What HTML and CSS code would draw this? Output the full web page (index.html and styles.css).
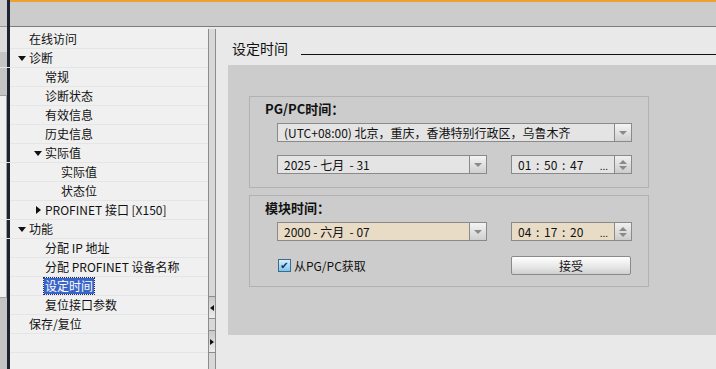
FILE: index.html
```html
<!DOCTYPE html>
<html lang="zh-CN">
<head>
    <meta charset="UTF-8">
    <title>设定时间</title>
    <link rel="stylesheet" href="styles.css">
</head>
<body>
<div class="app">
    <div class="side_strip">
        <div class="strip_top"></div>
        <div class="strip_band"></div>
        <div class="strip_box"></div>
    </div>
    <div class="divider"></div>
    <div class="main">
        <div class="orange"></div>
        <div class="toolbar"></div>
        <div class="body">
            <ul class="tree">
                <li class="row lv0">在线访问</li>
                <li class="row lv0 open"><span class="tw down"></span>诊断</li>
                <li class="row lv1">常规</li>
                <li class="row lv1">诊断状态</li>
                <li class="row lv1">有效信息</li>
                <li class="row lv1">历史信息</li>
                <li class="row lv1 open"><span class="tw down"></span>实际值</li>
                <li class="row lv2">实际值</li>
                <li class="row lv2">状态位</li>
                <li class="row lv1 open"><span class="tw right"></span>PROFINET 接口 [X150]</li>
                <li class="row lv0 open"><span class="tw down"></span>功能</li>
                <li class="row lv1">分配 IP 地址</li>
                <li class="row lv1">分配 PROFINET 设备名称</li>
                <li class="row lv1"><span class="selected">设定时间</span></li>
                <li class="row lv1">复位接口参数</li>
                <li class="row lv0">保存/复位</li>
                <li class="row lv0"></li>
            </ul>
            <div class="splitter">
                <div class="split_btn"><span class="tri_left"></span></div>
                <div class="split_btn"><span class="tri_right"></span></div>
            </div>
            <div class="content">
                <div class="page_title"><span>设定时间</span><div class="title_line"></div></div>
                <div class="panel">
                    <div class="group">
                        <div class="legend">PG/PC时间：</div>
                        <div class="field zone">
                            <span class="val">(UTC+08:00) 北京，重庆，香港特别行政区，乌鲁木齐</span>
                            <span class="drop"></span>
                        </div>
                        <div class="field_row">
                            <div class="field date">
                                <span class="val">2025 - 七月&nbsp; - 31</span>
                                <span class="drop"></span>
                            </div>
                            <div class="field time">
                                <span class="val clock">01 : 50 : 47</span>
                                <span class="dots">...</span>
                                <span class="spin"><i class="up"></i><i class="dn"></i></span>
                            </div>
                        </div>
                    </div>
                    <div class="group">
                        <div class="legend">模块时间：</div>
                        <div class="field_row first">
                            <div class="field date beige">
                                <span class="val">2000 - 六月&nbsp; - 07</span>
                                <span class="drop"></span>
                            </div>
                            <div class="field time beige">
                                <span class="val clock">04 : 17 : 20</span>
                                <span class="dots">...</span>
                                <span class="spin"><i class="up"></i><i class="dn"></i></span>
                            </div>
                        </div>
                        <div class="field_row check_row">
                            <label class="check"><span class="box">✔</span>从PG/PC获取</label>
                            <button class="accept">接受</button>
                        </div>
                    </div>
                </div>
            </div>
        </div>
    </div>
</div>
</body>
</html>
```

FILE: styles.css
```css
* {
    box-sizing: border-box;
}
body {
    margin: 0;
    padding: 0;
    font-family: "Noto Sans CJK SC", "Noto Sans", sans-serif;
    font-size: 12px;
    color: #111;
    background-color: #e9e9e9;
    width: 716px;
    height: 369px;
    overflow: hidden;
}
.app {
    display: flex;
    height: 369px;
}

/* far left strip */
.side_strip {
    width: 7px;
    display: flex;
    flex-direction: column;
    background-color: #c4c4c4;
}
.strip_top {
    height: 27px;
    background-color: #cccccc;
    border-bottom: 1px solid #9a9a9a;
}
.strip_band {
    height: 25px;
    background-color: #dcdcdc;
}
.strip_box {
    margin-top: 43px;
    height: 203px;
    background-color: #f0f0f0;
    border: 1px solid #a0a0a0;
    border-left: none;
}
.divider {
    width: 3px;
    background-color: #1e2233;
}

.main {
    flex: 1;
    display: flex;
    flex-direction: column;
}
.orange {
    height: 2px;
    background-color: #f0a030;
}
.toolbar {
    height: 25px;
    background-color: #cccccc;
    border-bottom: 1px solid #7c7c7c;
}
.body {
    flex: 1;
    display: flex;
}

/* tree */
.tree {
    list-style: none;
    margin: 0;
    padding: 3px 0 0;
    width: 198px;
    background-color: #f0f0f0;
}
.row {
    height: 19px;
    line-height: 18px;
    border-bottom: 1px solid #e5e5e5;
    white-space: nowrap;
    display: flex;
    align-items: center;
}
.lv0 {
    padding-left: 19px;
}
.lv1 {
    padding-left: 35px;
}
.lv2 {
    padding-left: 51px;
}
.open {
    margin-left: -14px;
}
.lv0.open {
    padding-left: 19px;
}
.tw {
    width: 14px;
    display: inline-flex;
    justify-content: center;
    align-items: center;
}
.tw.down::before {
    content: "";
    border-left: 4px solid transparent;
    border-right: 4px solid transparent;
    border-top: 5px solid #111;
}
.tw.right::before {
    content: "";
    border-top: 4px solid transparent;
    border-bottom: 4px solid transparent;
    border-left: 5px solid #111;
}
.selected {
    background-color: #3a64c8;
    color: #fff;
    padding: 0 1px;
    margin-left: -1px;
    outline: 1px dotted #1a2a60;
    line-height: 16px;
}

/* splitter */
.splitter {
    width: 8px;
    margin-top: 2px;
    background-color: #d8d8d8;
    border-left: 1px solid #8c8c8c;
    border-right: 1px solid #8c8c8c;
    padding-top: 267px;
}
.split_btn {
    height: 23px;
    margin-bottom: 11px;
    background: linear-gradient(#c8c8c8, #ececec);
    border-top: 1px solid #8c8c8c;
    border-bottom: 1px solid #8c8c8c;
    display: flex;
    align-items: center;
    justify-content: center;
}
.tri_left {
    border-top: 3px solid transparent;
    border-bottom: 3px solid transparent;
    border-right: 4px solid #111;
}
.tri_right {
    border-top: 3px solid transparent;
    border-bottom: 3px solid transparent;
    border-left: 4px solid #111;
}

/* content */
.content {
    flex: 1;
    background-color: #e9e9e9;
}
.page_title {
    display: flex;
    align-items: flex-start;
    padding: 11px 0 0 16px;
    height: 38px;
    font-size: 14px;
}
.page_title span {
    line-height: 20px;
}
.title_line {
    flex: 1;
    height: 17px;
    margin-left: 13px;
    border-bottom: 1px solid #111;
}
.panel {
    margin-left: 12px;
    height: 270px;
    background-color: #cccccc;
    padding: 31px 0 0 21px;
    display: flex;
    flex-direction: column;
    gap: 7px;
}
.group {
    width: 400px;
    height: 92px;
    border: 1px solid #b2b2b2;
    padding: 3px 0 0 27px;
}
.legend {
    font-weight: bold;
    font-size: 13px;
    line-height: 18px;
    margin-left: -12px;
    margin-bottom: 5px;
}
.field {
    height: 19px;
    border: 1px solid #8a8a8a;
    background-color: #e4e4e4;
    display: flex;
    align-items: center;
}
.field .val {
    flex: 1;
    padding-left: 6px;
    white-space: nowrap;
    line-height: 17px;
}
.field .clock {
    word-spacing: 2px;
}
.zone {
    width: 355px;
}
.drop {
    width: 17px;
    height: 100%;
    border-left: 1px solid #8a8a8a;
    background: linear-gradient(#f4f4f4, #cfcfcf);
    display: flex;
    align-items: center;
    justify-content: center;
}
.drop::before {
    content: "";
    border-left: 4px solid transparent;
    border-right: 4px solid transparent;
    border-top: 4px solid #8a8a8a;
}
.field_row {
    display: flex;
    gap: 24px;
    margin-top: 13px;
}
.field_row.first {
    margin-top: 0;
}
.date {
    width: 210px;
}
.time {
    width: 121px;
}
.dots {
    font-size: 10px;
    padding-right: 6px;
    line-height: 14px;
    align-self: flex-end;
}
.beige {
    background-color: #e8dcc6;
}
.spin {
    width: 17px;
    height: 100%;
    border-left: 1px solid #8a8a8a;
    background: linear-gradient(#f0f0f0, #cccccc);
    display: flex;
    flex-direction: column;
    align-items: center;
    justify-content: center;
    gap: 2px;
}
.spin .up {
    border-left: 4px solid transparent;
    border-right: 4px solid transparent;
    border-bottom: 4px solid #8a8a8a;
}
.spin .dn {
    border-left: 4px solid transparent;
    border-right: 4px solid transparent;
    border-top: 4px solid #8a8a8a;
}
.check_row {
    margin-top: 15px;
    align-items: center;
}
.check {
    width: 210px;
    display: flex;
    align-items: center;
    gap: 3px;
    margin-left: 1px;
}
.box {
    width: 13px;
    height: 13px;
    border: 1px solid #3c6a8a;
    background: linear-gradient(#d6eefa, #7cc6ea);
    color: #10306a;
    font-size: 10px;
    line-height: 11px;
    text-align: center;
    font-family: "DejaVu Sans", sans-serif;
}
.accept {
    width: 120px;
    height: 19px;
    margin-left: -1px;
    padding: 0;
    border: 1px solid #8a8a8a;
    border-radius: 2px;
    background: linear-gradient(#ffffff, #e6e6e6 60%, #cfcfcf);
    font-family: "Noto Sans CJK SC", sans-serif;
    font-size: 12px;
    color: #111;
    line-height: 17px;
}
```
